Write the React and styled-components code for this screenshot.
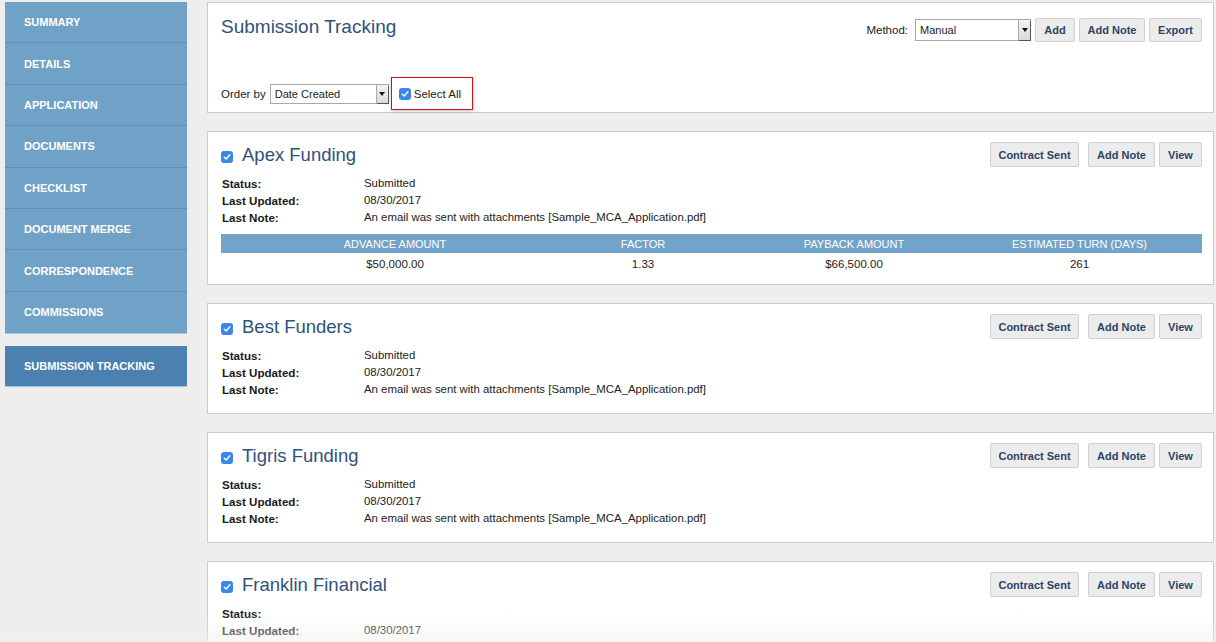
import React from "react";
import styled, { createGlobalStyle } from "styled-components";

const GlobalStyle = createGlobalStyle`
  html, body {
    margin: 0;
    padding: 0;
    height: 642px;
    overflow: hidden;
    background: #eeeeed;
    font-family: "Liberation Sans", Arial, Helvetica, sans-serif;
  }
  * {
    box-sizing: border-box;
  }
`;

const Page = styled.div`
  display: flex;
  gap: 20px;
  padding: 2px 2px 0 5px;
  height: 642px;
  overflow: hidden;
`;

const Sidebar = styled.nav`
  width: 182px;
  flex-shrink: 0;
  display: flex;
  flex-direction: column;
  gap: 12px;
`;

const NavGroup = styled.div`
  background: #70a2c7;
  border-bottom: 1px solid #a9c6dc;
`;

const NavItem = styled.div`
  height: ${(p) => (p.$active ? "41px" : "41.4px")};
  display: flex;
  align-items: center;
  padding-left: 19px;
  color: #ffffff;
  font-size: 11px;
  font-weight: bold;
  text-transform: uppercase;
  background: ${(p) => (p.$active ? "#4b80b0" : "transparent")};
  border-bottom: 1px solid ${(p) => (p.$active ? "#a9c3da" : "#5e8fb6")};
  &:last-child {
    border-bottom: ${(p) => (p.$active ? "1px solid #a9c3da" : "none")};
  }
`;

const Main = styled.div`
  flex: 1;
  display: flex;
  flex-direction: column;
  gap: 18px;
  min-width: 0;
`;

const Panel = styled.div`
  background: #ffffff;
  border: 1px solid #cbcbcb;
  padding: ${(p) => (p.$header ? "14px 11px 7px 13px" : p.$hasTable ? "10px 11px 9px 13px" : "10px 11px 15px 13px")};
`;

const TopRow = styled.div`
  display: flex;
  justify-content: space-between;
  align-items: flex-start;
  height: 26px;
`;

const PageTitle = styled.h1`
  margin: 0;
  font-size: 19px;
  line-height: 20px;
  font-weight: normal;
  color: #2f527b;
`;

const Controls = styled.div`
  display: flex;
  align-items: center;
  gap: 4px;
  height: 26px;
`;

const FieldLabel = styled.span`
  font-size: 11.5px;
  color: #222;
  margin-right: ${(p) => p.$gap || 4}px;
`;

const SelectBox = styled.div`
  display: flex;
  align-items: stretch;
  width: ${(p) => p.$width}px;
  height: ${(p) => p.$height}px;
  border: 1px solid #a8a8a8;
  background: #fff;
  margin-right: ${(p) => p.$mr || 0}px;
`;

const SelectText = styled.span`
  flex: 1;
  display: flex;
  align-items: center;
  padding-left: 4px;
  font-size: 11px;
  color: #222;
`;

const SelectArrow = styled.span`
  width: 12px;
  display: flex;
  align-items: center;
  justify-content: center;
  background: linear-gradient(#f2f2f2, #dadada);
  border-left: 1px solid #a8a8a8;
  box-shadow: 1px 1px 0 #555;
  &::after {
    content: "";
    border-left: 3px solid transparent;
    border-right: 3px solid transparent;
    border-top: 4px solid #111;
  }
`;

const Button = styled.button`
  height: ${(p) => p.$height || 24}px;
  width: ${(p) => p.$width}px;
  padding: 0;
  margin-right: ${(p) => p.$mr || 0}px;
  background: #ececec;
  border: 1px solid #d0d0d0;
  border-radius: 2px;
  color: #2b4466;
  font-family: "Liberation Sans", Arial, sans-serif;
  font-size: 11px;
  font-weight: bold;
  cursor: pointer;
`;

const OrderRow = styled.div`
  display: flex;
  align-items: center;
  height: 22px;
  margin-top: 40px;
`;

const Highlight = styled.label`
  position: relative;
  display: flex;
  align-items: center;
  gap: 3px;
  font-size: 11.5px;
  color: #222;
  &::after {
    content: "";
    position: absolute;
    top: -11px;
    bottom: -10px;
    left: -8px;
    right: -12px;
    border: 1.5px solid #d0101a;
    box-shadow: 0 1px 3px rgba(0, 0, 0, 0.25);
    pointer-events: none;
  }
`;

const Check = styled.span`
  width: ${(p) => p.$size || 12}px;
  height: ${(p) => p.$size || 12}px;
  border-radius: 3px;
  background: #3b87ea;
  display: inline-flex;
  align-items: center;
  justify-content: center;
  flex-shrink: 0;
  margin-top: ${(p) => p.$mt || 0}px;
`;

const CheckBox = ({ size, mt }) => (
  <Check $size={size} $mt={mt}>
    <svg width="8" height="8" viewBox="0 0 8 8">
      <path d="M1.3 4.2 L3.2 6 L6.8 1.8" fill="none" stroke="#fff" strokeWidth="1.4" strokeLinecap="round" strokeLinejoin="round" />
    </svg>
  </Check>
);

const CardHead = styled.div`
  display: flex;
  justify-content: space-between;
  align-items: center;
  height: 25px;
`;

const TitleWrap = styled.div`
  display: flex;
  align-items: center;
  gap: 9px;
`;

const CardTitle = styled.h2`
  margin: 0;
  font-size: 18.5px;
  font-weight: normal;
  color: #2f527b;
  line-height: 22px;
`;

const ButtonGroup = styled.div`
  display: flex;
  align-items: center;
`;

const Details = styled.div`
  display: grid;
  grid-template-columns: 142px 1fr;
  margin-top: 8px;
  font-size: 11.4px;
  line-height: 17px;
  color: #222;
  padding-left: 1px;
`;

const DetailLabel = styled.span`
  font-weight: bold;
  font-size: 11.6px;
  color: #1a1a1a;
`;

const Table = styled.div`
  margin-top: 8px;
  display: grid;
  grid-template-columns: 348px 148px 274px 1fr;
`;

const HeadCell = styled.div`
  height: 19px;
  background: #72a3c8;
  color: #fff;
  font-size: 11px;
  display: flex;
  align-items: center;
  justify-content: center;
  text-transform: uppercase;
  padding-right: ${(p) => p.$pr || 0}px;
`;

const BodyCell = styled.div`
  height: 22px;
  font-size: 11.5px;
  color: #222;
  display: flex;
  align-items: center;
  justify-content: center;
  padding-right: ${(p) => p.$pr || 0}px;
`;

const Fade = styled.div`
  position: fixed;
  left: 0;
  right: 0;
  bottom: 0;
  height: 30px;
  background: linear-gradient(rgba(240, 240, 239, 0), rgba(240, 240, 239, 0.55));
  pointer-events: none;
`;

const navItems = [
  "Summary",
  "Details",
  "Application",
  "Documents",
  "Checklist",
  "Document Merge",
  "Correspondence",
  "Commissions",
];

const note = "An email was sent with attachments [Sample_MCA_Application.pdf]";

const submissions = [
  {
    name: "Apex Funding",
    status: "Submitted",
    updated: "08/30/2017",
    note,
    terms: ["$50,000.00", "1.33", "$66,500.00", "261"],
  },
  { name: "Best Funders", status: "Submitted", updated: "08/30/2017", note },
  { name: "Tigris Funding", status: "Submitted", updated: "08/30/2017", note },
  { name: "Franklin Financial", status: "", updated: "08/30/2017", note: "" },
];

const termHeads = ["Advance Amount", "Factor", "Payback Amount", "Estimated Turn (Days)"];

const Select = ({ value, width, height, mr }) => (
  <SelectBox $width={width} $height={height} $mr={mr}>
    <SelectText>{value}</SelectText>
    <SelectArrow />
  </SelectBox>
);

const SubmissionCard = ({ item }) => (
  <Panel $hasTable={!!item.terms}>
    <CardHead>
      <TitleWrap>
        <CheckBox size={12} mt={5} />
        <CardTitle>{item.name}</CardTitle>
      </TitleWrap>
      <ButtonGroup>
        <Button $height={25} $width={89} $mr={9}>Contract Sent</Button>
        <Button $height={25} $width={67} $mr={4}>Add Note</Button>
        <Button $height={25} $width={43}>View</Button>
      </ButtonGroup>
    </CardHead>
    <Details>
      <DetailLabel>Status:</DetailLabel>
      <span>{item.status}</span>
      <DetailLabel>Last Updated:</DetailLabel>
      <span>{item.updated}</span>
      <DetailLabel>Last Note:</DetailLabel>
      <span>{item.note}</span>
    </Details>
    {item.terms && (
      <Table>
        {termHeads.map((h, i) => (
          <HeadCell key={h} $pr={i === 3 ? 34 : 0}>{h}</HeadCell>
        ))}
        {item.terms.map((t, i) => (
          <BodyCell key={i} $pr={i === 3 ? 34 : 0}>{t}</BodyCell>
        ))}
      </Table>
    )}
  </Panel>
);

export default function App() {
  return (
    <>
      <GlobalStyle />
      <Page>
        <Sidebar>
          <NavGroup>
            {navItems.map((n) => (
              <NavItem key={n}>{n}</NavItem>
            ))}
          </NavGroup>
          <NavItem $active>Submission Tracking</NavItem>
        </Sidebar>
        <Main>
          <Panel $header>
            <TopRow>
              <PageTitle>Submission Tracking</PageTitle>
              <Controls>
                <FieldLabel $gap={3}>Method:</FieldLabel>
                <Select value="Manual" width={116} height={22} mr={0} />
                <Button $width={40}>Add</Button>
                <Button $width={66}>Add Note</Button>
                <Button $width={53}>Export</Button>
              </Controls>
            </TopRow>
            <OrderRow>
              <FieldLabel $gap={4}>Order by</FieldLabel>
              <Select value="Date Created" width={119} height={20} mr={10} />
              <Highlight>
                <CheckBox size={12} />
                Select All
              </Highlight>
            </OrderRow>
          </Panel>
          {submissions.map((s) => (
            <SubmissionCard key={s.name} item={s} />
          ))}
        </Main>
      </Page>
      <Fade />
    </>
  );
}
